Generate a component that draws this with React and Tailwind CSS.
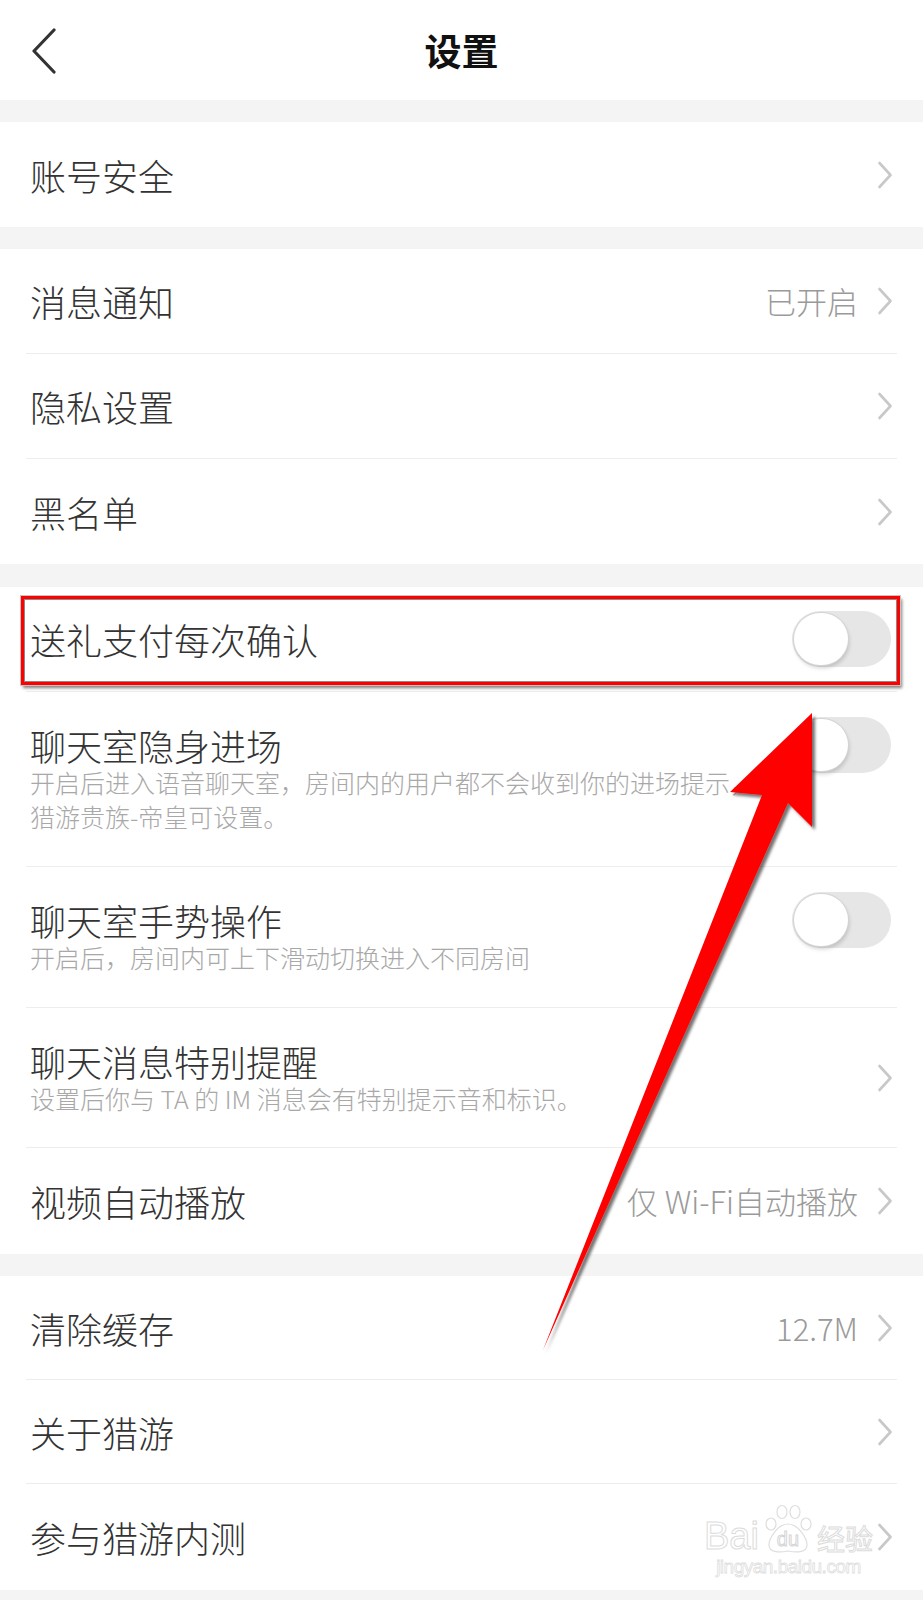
import React from 'react';

// 设置页：分组列表 + 标注（红框、红箭头）
const Chevron = () => (
  <svg width="16" height="28" viewBox="0 0 16 28" fill="none" className="shrink-0">
    <path d="M2.5 2 L13.5 14 L2.5 26" stroke="#c8c8c8" strokeWidth="2.6" strokeLinecap="round" strokeLinejoin="round" />
  </svg>
);

const Toggle = () => (
  <div className="-my-2 mr-[2px] flex h-[56px] w-[99px] shrink-0 items-center rounded-full bg-[#e6e6e6] p-[2px]">
    <div className="h-[52px] w-[54px] rounded-full bg-white shadow-[0_0_0_1px_#d4d4d4,1px_3px_4px_rgba(0,0,0,0.18)]" />
  </div>
);

const Band = ({ h = 'h-[22px]' }) => <div className={`${h} bg-[#f4f4f4]`} />;

const Row = ({ label, value, desc, toggle, height = 'h-[105px]', divider = true, children }) => (
  <div className="relative bg-white px-[26px]">
    <div
      className={`flex ${height} items-center pl-[4px] pr-[4px] ${divider ? 'border-b border-[#ededed]' : ''}`}
    >
      <div className="flex min-w-0 flex-1 flex-col">
        <div className="flex items-center">
          <span className="flex-1 text-[36px] font-light leading-[40px] text-[#333]">{label}</span>
          {toggle && <Toggle />}
        </div>
        {desc && <p className="text-[25px] font-light leading-[34px] text-[#a8a8a8]">{desc}</p>}
      </div>
      {value && <span className="mr-[19px] text-[31px] font-light leading-[40px] text-[#9a9a9a]">{value}</span>}
      {!toggle && <Chevron />}
    </div>
    {children}
  </div>
);

const Watermark = () => (
  <div className="pointer-events-none absolute left-[704px] top-[20px] flex flex-col items-center whitespace-nowrap">
    <div className="flex items-end">
      <span className="text-[38px] leading-[36px] font-['Liberation_Sans',sans-serif] text-white [-webkit-text-stroke:1px_#dcdcdc]">
        Bai
      </span>
      <div className="relative mx-[1px] flex h-[50px] w-[56px] shrink-0 items-end justify-center">
        <svg className="absolute left-0 top-0" width="56" height="50" viewBox="0 0 56 50" fill="none">
          <ellipse cx="11" cy="20" rx="5" ry="6" stroke="#dedede" strokeWidth="1.2" />
          <ellipse cx="22" cy="8" rx="5" ry="6.5" stroke="#dedede" strokeWidth="1.2" />
          <ellipse cx="35" cy="8" rx="5" ry="6.5" stroke="#dedede" strokeWidth="1.2" />
          <ellipse cx="46" cy="20" rx="5" ry="6" stroke="#dedede" strokeWidth="1.2" />
          <path d="M28 20 C18 20 9 34 9 41 C9 48 18 49 28 47 C38 49 47 48 47 41 C47 34 38 20 28 20 Z" stroke="#dedede" strokeWidth="1.2" />
        </svg>
        <span className="relative mb-[4px] text-[20px] leading-[22px] font-['Liberation_Sans',sans-serif] text-white [-webkit-text-stroke:1px_#d6d6d6]">
          du
        </span>
      </div>
      <span className="text-[28px] leading-[32px] text-white [-webkit-text-stroke:1px_#dcdcdc]">经验</span>
    </div>
    <span className="mt-[3px] text-[19px] leading-[20px] font-['Liberation_Sans',sans-serif] tracking-[-0.5px] text-white [-webkit-text-stroke:0.8px_#dedede]">
      jingyan.baidu.com
    </span>
  </div>
);

export default function App() {
  return (
    <div className="relative min-h-screen w-full bg-[#f4f4f4] font-['Noto_Sans_CJK_SC','Noto_Sans',sans-serif]">
      <header className="grid h-[100px] grid-cols-[90px_1fr_90px] items-center bg-white">
        <div className="mt-[2px] pl-[31px]">
          <svg width="26" height="46" viewBox="0 0 26 46" fill="none">
            <path d="M23 2 L3 23 L23 44" stroke="#333" strokeWidth="3.2" strokeLinecap="round" strokeLinejoin="round" />
          </svg>
        </div>
        <h1 className="text-center text-[37px] font-bold leading-[44px] text-[#111]">设置</h1>
        <div />
      </header>

      <Band />
      <Row label="账号安全" divider={false} />

      <Band />
      <Row label="消息通知" value="已开启" />
      <Row label="隐私设置" />
      <Row label="黑名单" divider={false} />

      <Band h="h-[23px]" />
      <Row label="送礼支付每次确认" toggle>
        <div className="pointer-events-none absolute left-[21px] top-[9px] h-[89px] w-[879px] border-[3px] border-[#ff0000] shadow-[inset_0_0_0_1px_#8a8a8a,0_0_0_1px_#c4c4c4,2px_3px_3px_rgba(0,0,0,0.5)]" />
      </Row>
      <Row
        label="聊天室隐身进场"
        toggle
        height="h-[175px]"
        desc={
          <>
            开启后进入语音聊天室，房间内的用户都不会收到你的进场提示，
            <br />
            猎游贵族-帝皇可设置。
          </>
        }
      />
      <Row label="聊天室手势操作" toggle height="h-[141px]" desc="开启后，房间内可上下滑动切换进入不同房间" />
      <Row label="聊天消息特别提醒" height="h-[140px]" desc="设置后你与 TA 的 IM 消息会有特别提示音和标识。" />
      <Row label="视频自动播放" value="仅 Wi-Fi自动播放" height="h-[106px]" divider={false} />

      <Band />
      <Row label="清除缓存" value="12.7M" height="h-[104px]" />
      <Row label="关于猎游" height="h-[104px]" />
      <Row label="参与猎游内测" height="h-[106px]" divider={false}>
        <Watermark />
      </Row>
      <div className="h-[10px]" />

      <svg
        className="pointer-events-none absolute left-0 top-0"
        width="923"
        height="1600"
        viewBox="0 0 923 1600"
      >
        <defs>
          <filter id="arrowShadow" x="-20%" y="-20%" width="140%" height="140%">
            <feDropShadow dx="3" dy="3" stdDeviation="1.6" floodColor="#000" floodOpacity="0.55" />
          </filter>
        </defs>
        <polygon
          points="543,1350 762,795 730,792 812,713 812,827 788,803"
          fill="#ff0000"
          filter="url(#arrowShadow)"
        />
      </svg>
    </div>
  );
}
